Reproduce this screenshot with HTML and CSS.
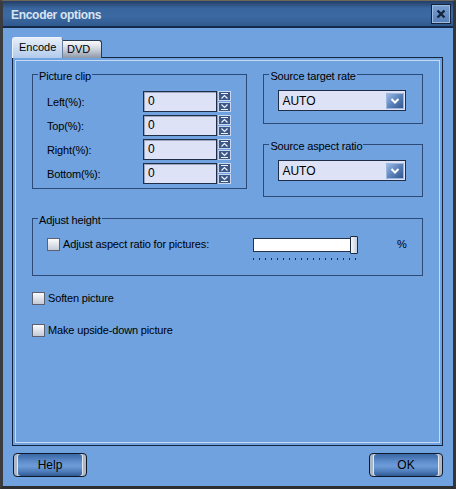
FILE: index.html
```html
<!DOCTYPE html>
<html>
<head>
<meta charset="utf-8">
<link rel="stylesheet" href="styles.css">
</head>
<body>
<div class="window">
  <div class="titlebar">
    <span class="title">Encoder options</span>
    <div class="close">
      <svg width="18" height="18" viewBox="0 0 18 18"><path d="M5.5 5.5 L12.5 12.5 M12.5 5.5 L5.5 12.5" stroke="#15243d" stroke-width="2.4" fill="none"/></svg>
    </div>
  </div>
  <div class="client">
    <div class="tabs">
      <div class="tab active">Encode</div>
      <div class="tab">DVD</div>
    </div>
    <div class="panel">
      <div class="row1">
        <div class="group clip">
          <div class="legend">Picture clip</div>
          <div class="fields">
            <div class="field"><span class="lbl">Left(%):</span><div class="input">0</div>
              <svg class="spin" width="13" height="21" viewBox="0 0 13 21"><rect x="0.5" y="0.5" width="12" height="9" fill="#3a5788" stroke="#c9d7ef"/><path d="M3 2.5h7 M3.5 7.5 L6.5 4.5 L9.5 7.5" stroke="#eef3fc" stroke-width="1.2" fill="none"/><rect x="0.5" y="11.5" width="12" height="9" fill="#3a5788" stroke="#c9d7ef"/><path d="M3.5 13.5 L6.5 16.5 L9.5 13.5 M3 18.5h7" stroke="#eef3fc" stroke-width="1.2" fill="none"/></svg>
            </div>
            <div class="field"><span class="lbl">Top(%):</span><div class="input">0</div>
              <svg class="spin" width="13" height="21" viewBox="0 0 13 21"><rect x="0.5" y="0.5" width="12" height="9" fill="#3a5788" stroke="#c9d7ef"/><path d="M3 2.5h7 M3.5 7.5 L6.5 4.5 L9.5 7.5" stroke="#eef3fc" stroke-width="1.2" fill="none"/><rect x="0.5" y="11.5" width="12" height="9" fill="#3a5788" stroke="#c9d7ef"/><path d="M3.5 13.5 L6.5 16.5 L9.5 13.5 M3 18.5h7" stroke="#eef3fc" stroke-width="1.2" fill="none"/></svg>
            </div>
            <div class="field"><span class="lbl">Right(%):</span><div class="input">0</div>
              <svg class="spin" width="13" height="21" viewBox="0 0 13 21"><rect x="0.5" y="0.5" width="12" height="9" fill="#3a5788" stroke="#c9d7ef"/><path d="M3 2.5h7 M3.5 7.5 L6.5 4.5 L9.5 7.5" stroke="#eef3fc" stroke-width="1.2" fill="none"/><rect x="0.5" y="11.5" width="12" height="9" fill="#3a5788" stroke="#c9d7ef"/><path d="M3.5 13.5 L6.5 16.5 L9.5 13.5 M3 18.5h7" stroke="#eef3fc" stroke-width="1.2" fill="none"/></svg>
            </div>
            <div class="field"><span class="lbl">Bottom(%):</span><div class="input">0</div>
              <svg class="spin" width="13" height="21" viewBox="0 0 13 21"><rect x="0.5" y="0.5" width="12" height="9" fill="#3a5788" stroke="#c9d7ef"/><path d="M3 2.5h7 M3.5 7.5 L6.5 4.5 L9.5 7.5" stroke="#eef3fc" stroke-width="1.2" fill="none"/><rect x="0.5" y="11.5" width="12" height="9" fill="#3a5788" stroke="#c9d7ef"/><path d="M3.5 13.5 L6.5 16.5 L9.5 13.5 M3 18.5h7" stroke="#eef3fc" stroke-width="1.2" fill="none"/></svg>
            </div>
          </div>
        </div>
        <div class="rcol">
          <div class="group rate">
            <div class="legend">Source target rate</div>
            <div class="select"><span class="seltext">AUTO</span>
              <div class="dd"><svg width="16" height="14" viewBox="0 0 16 14"><path d="M4.5 5 L8 8.5 L11.5 5" stroke="#ffffff" stroke-width="2" fill="none"/></svg></div>
            </div>
          </div>
          <div class="group aspect">
            <div class="legend">Source aspect ratio</div>
            <div class="select"><span class="seltext">AUTO</span>
              <div class="dd"><svg width="16" height="14" viewBox="0 0 16 14"><path d="M4.5 5 L8 8.5 L11.5 5" stroke="#ffffff" stroke-width="2" fill="none"/></svg></div>
            </div>
          </div>
        </div>
      </div>
      <div class="group adjust">
        <div class="legend">Adjust height</div>
        <div class="adjrow">
          <span class="box"></span>
          <span class="adjlabel">Adjust aspect ratio for pictures:</span>
          <div class="slider">
            <div class="sliderbar">
              <div class="track"></div>
              <div class="thumb"></div>
            </div>
            <div class="ticks"></div>
          </div>
          <span class="pct">%</span>
        </div>
      </div>
      <div class="check soften"><span class="box"></span><span class="chklabel">Soften picture</span></div>
      <div class="check upside"><span class="box"></span><span class="chklabel">Make upside-down picture</span></div>
    </div>
    <div class="footer">
      <div class="btn">Help</div>
      <div class="btn">OK</div>
    </div>
  </div>
</div>
</body>
</html>
```
FILE: styles.css
```css
* { box-sizing: border-box; }
html, body { margin: 0; padding: 0; background: #6fa2df; }
body { font-family: "Liberation Sans", Arial, sans-serif; font-size: 11px; color: #000; letter-spacing: -0.15px; }

.window {
  width: 456px;
  height: 489px;
  border-style: solid;
  border-width: 1px 3px 3px 3px;
  border-color: #6e6656 #34363a #2c2e32 #3a3c40;
  background: #6fa2df;
  display: flex;
  flex-direction: column;
}

.titlebar {
  height: 27px;
  border-bottom: 2px solid #142848;
  background: linear-gradient(to bottom, #243f66 0%, #3a669e 30%, #3c69a2 60%, #2f5a90 100%);
  display: flex;
  justify-content: space-between;
  align-items: flex-start;
  padding: 0 2px 0 8px;
}
.title {
  font-weight: bold;
  font-size: 12px;
  letter-spacing: -0.3px;
  line-height: 15px;
  padding-top: 7px;
  color: #d9e4f1;
}
.close {
  margin-top: 3px;
  width: 20px;
  height: 20px;
  border: 1px solid #14233c;
  background: linear-gradient(to bottom, #7aa0d2, #5580b8);
  box-shadow: inset 0 0 0 1px #9dbbe2;
  display: flex;
  align-items: center;
  justify-content: center;
}

.client {
  flex: 1;
  display: flex;
  flex-direction: column;
  padding: 9px 10px 0 9px;
}

.tabs {
  display: flex;
  align-items: flex-end;
  height: 21px;
  position: relative;
  z-index: 1;
}
.tab {
  font-size: 11px;
  letter-spacing: 0;
}
.tab.active {
  width: 51px;
  height: 21px;
  border: 1px solid #eef3fa;
  border-bottom: none;
  border-right-color: #6b7f9c;
  border-radius: 3px 3px 0 0;
  background: linear-gradient(to bottom, #e6eef9, #b2cbeb);
  padding: 3px 0 0 6px;
}
.tab:not(.active) {
  width: 39px;
  height: 18px;
  border: 1px solid #2a3a55;
  border-bottom: none;
  border-left: none;
  border-radius: 0 3px 0 0;
  background: linear-gradient(to bottom, #fbfbfc 0%, #d2d7df 45%, #8e98a9 100%);
  padding: 2px 0 0 4px;
}

.panel {
  height: 389px;
  margin-top: -1px;
  border: 1px solid #152540;
  box-shadow: inset 0 0 0 2px #6fa2df, inset 0 0 0 3px #c6dbf3;
  padding: 16px 19px 0 19px;
  display: flex;
  flex-direction: column;
}

.row1 {
  display: flex;
  gap: 16px;
  align-items: flex-start;
}

.group {
  border: 1px solid #2c4a77;
  display: flex;
  flex-direction: column;
}
.legend {
  align-self: flex-start;
  margin: -5px 0 0 5px;
  padding: 0 1px;
  line-height: 13px;
  background: #6fa2df;
  font-size: 11px;
}

.clip { width: 216px; }
.fields {
  margin-top: 8px;
  padding: 0 0 4px 14px;
  display: flex;
  flex-direction: column;
  gap: 3px;
}
.field {
  display: flex;
  align-items: center;
  height: 21px;
}
.lbl { width: 96px; }
.input {
  width: 74px;
  height: 21px;
  border: 1px solid #1e2e48;
  background: #dde2f6;
  box-shadow: inset 1px 1px 0 #9aa6c0;
  font-size: 12px;
  line-height: 19px;
  padding-left: 4px;
}
.spin { margin-left: 1px; display: block; }

.rcol {
  width: 160px;
  display: flex;
  flex-direction: column;
  gap: 20px;
}
.select {
  margin: 7px 0 0 14px;
  width: 128px;
  height: 21px;
  border: 1px solid #1e2e48;
  background: #dde2f6;
  display: flex;
  align-items: center;
  justify-content: space-between;
  padding: 0 1px 0 3px;
}
.seltext { font-size: 12px; letter-spacing: 0; }
.dd {
  width: 18px;
  height: 16px;
  border: 1px solid #9bb7df;
  background: linear-gradient(135deg, #9bbbe6 0%, #5b82ba 50%, #34578f 100%);
  display: flex;
  align-items: center;
  justify-content: center;
}
.rate { padding-bottom: 12px; }
.aspect { padding-bottom: 15px; }

.adjust {
  margin-top: 21px;
  padding-bottom: 15px;
}
.adjrow {
  margin-top: 9px;
  padding-left: 14px;
  display: flex;
  align-items: flex-start;
}
.box {
  width: 13px;
  height: 13px;
  border: 1px solid #5a6170;
  background: linear-gradient(to bottom, #fbfbfd, #c3cad6);
  flex: none;
}
.adjrow .box { margin-top: 2px; }
.adjlabel {
  width: 192px;
  padding-left: 3px;
  line-height: 15px;
  margin-top: 1px;
}
.slider {
  width: 105px;
  display: flex;
  flex-direction: column;
  margin-left: 1px;
}
.sliderbar {
  position: relative;
  height: 18px;
}
.track {
  margin-top: 2px;
  width: 98px;
  height: 14px;
  border: 1px solid #25344d;
  background: #ffffff;
}
.thumb {
  position: absolute;
  left: 97px;
  top: 0;
  width: 8px;
  height: 18px;
  border: 1px solid #1d2a40;
  border-radius: 1px;
  background: linear-gradient(to right, #f4f6fa, #c5cfe0);
}
.ticks {
  margin-top: 4px;
  width: 104px;
  height: 2px;
  background: repeating-linear-gradient(to right, #1f2d45 0 1px, transparent 1px 6px);
}
.pct {
  margin-left: 39px;
  line-height: 15px;
  margin-top: 1px;
}

.check {
  display: flex;
  align-items: center;
  height: 13px;
}
.chklabel { margin-left: 3px; line-height: 13px; }
.soften { margin-top: 16px; }
.upside { margin-top: 19px; }

.footer {
  margin-top: 7px;
  display: flex;
  justify-content: space-between;
  padding-left: 1px;
}
.btn {
  width: 74px;
  height: 24px;
  border: 1px solid #0d1a2c;
  border-radius: 4px;
  background: linear-gradient(to bottom, #3a67a5 0%, #5e8ecd 35%, #6e9cd9 55%, #4d7cbb 80%, #2f5890 100%);
  box-shadow: inset 3px 0 0 #aeb7c4, inset -3px 0 0 #aeb7c4, inset 4px 0 0 #e2e6ec, inset -4px 0 0 #e2e6ec;
  text-align: center;
  line-height: 22px;
  font-size: 12px;
  letter-spacing: 0;
  color: #000;
}
```
